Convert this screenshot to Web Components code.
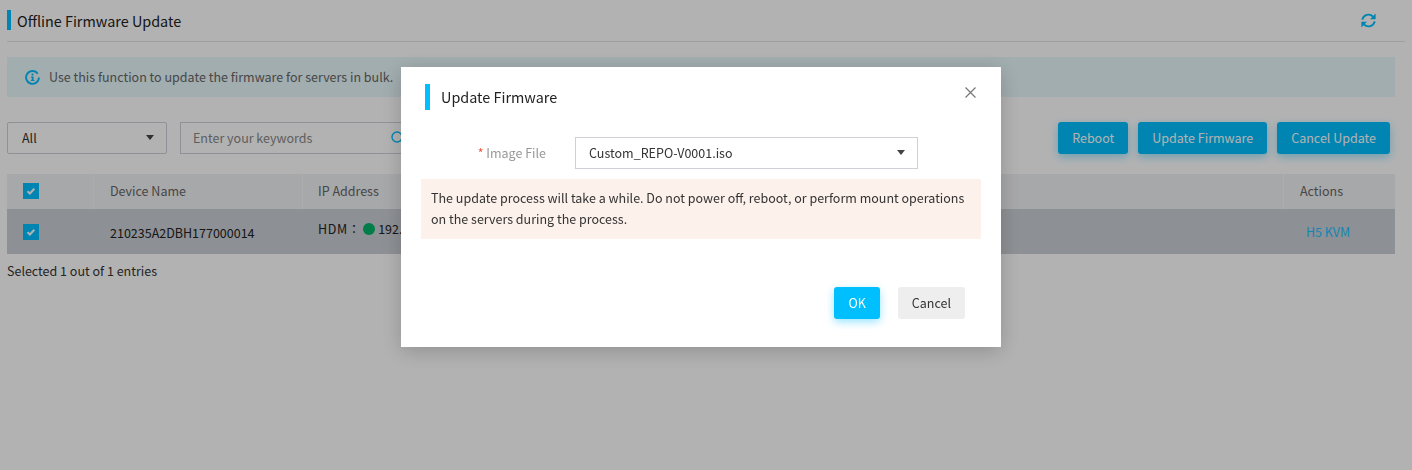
<!DOCTYPE html>
<html>
<head>
<meta charset="utf-8">
<style>
  html, body { margin: 0; height: 100%; background: #fff; overflow: hidden; }
  body { font: 12.5px/20px "Noto Sans CJK SC", "Noto Sans", sans-serif; color: #333; }
</style>
</head>
<body>
<firmware-page>
  <page-title slot="title">Offline Firmware Update</page-title>
  <info-notice slot="notice">Use this function to update the firmware for servers in bulk.</info-notice>
  <pick-box slot="filter" style="width:160px;--tx:14px">All</pick-box>
  <search-box slot="filter"></search-box>
  <act-button slot="actions" kind="primary">Reboot</act-button>
  <act-button slot="actions" kind="primary">Update Firmware</act-button>
  <act-button slot="actions" kind="primary">Cancel Update</act-button>
  <device-table slot="table"></device-table>
  <span slot="footer">Selected 1 out of 1 entries</span>
</firmware-page>
<modal-layer>
  <update-dialog></update-dialog>
</modal-layer>

<script>
(function() {

function define(name, css, html) {
  customElements.define(name, class extends HTMLElement {
    constructor() {
      super();
      this.attachShadow({mode: 'open'}).innerHTML = '<style>' + css + '</style>' + html;
    }
  });
}

const caret = '<svg width="8" height="5" viewBox="0 0 8 5"><path d="M0 0h8L4 5z" fill="#444"/></svg>';
const refreshHalf = '<path d="M1.300 6.600A6.300 6.300 0 0 1 12 3.600" fill="none" stroke="#00bfff" stroke-width="1.900"/><path d="M14.600 .6v5.600H9z" fill="#00bfff"/>';

define('firmware-page', `
  :host { display: block; }
  .content { padding: 0 17px 0 7px; }
  .notice { margin-top: 15px; }
  .tools { display: flex; justify-content: space-between; margin-top: 25px; }
  .group { display: flex; gap: 13px; }
  .group.right { gap: 10px; margin-right: 5px; }
  .table { margin-top: 20px; }
  .footer { margin-top: 7px; color: #333; }
`, `
  <slot name="title"></slot>
  <div class="content">
    <div class="notice"><slot name="notice"></slot></div>
    <div class="tools">
      <div class="group"><slot name="filter"></slot></div>
      <div class="group right"><slot name="actions"></slot></div>
    </div>
    <div class="table"><slot name="table"></slot></div>
    <div class="footer"><slot name="footer"></slot></div>
  </div>
`);

define('page-title', `
  :host { display: block; margin: 0 7px; height: 41px; border-bottom: 1px solid #e3e4ea; box-sizing: content-box; }
  .row { display: flex; align-items: center; height: 41px; }
  .bar { width: 4px; height: 20px; background: #00bfff; margin: -1px 6px 0 0; }
  .text { font-size: 14.4px; color: #222; flex: 1; }
  svg { margin-right: 29px; display: block; }
`, `
  <div class="row">
    <div class="bar"></div>
    <div class="text"><slot></slot></div>
    <svg width="15" height="15" viewBox="0 0 15 15">${refreshHalf}<g transform="rotate(180 7.500 7.500)">${refreshHalf}</g></svg>
  </div>
`);

define('info-notice', `
  :host { display: flex; align-items: center; height: 40px; padding-left: 18px; background: #e8f8fb; color: #666; }
  svg { margin-right: 9px; display: block; }
`, `
  <svg width="15" height="15" viewBox="0 0 15 15">
    <path d="M12.700 3.700A6.400 6.400 0 1 0 13.900 7.500" fill="none" stroke="#00bfff" stroke-width="1.900"/>
    <circle cx="7.500" cy="4.600" r="1.100" fill="#00bfff"/>
    <path d="M5.900 6.400h2.700v3.500h.9v1.100H5.800V9.900h.9V7.500h-.8z" fill="#00bfff"/>
  </svg>
  <slot></slot>
`);

define('pick-box', `
  :host { display: flex; align-items: center; justify-content: space-between; box-sizing: border-box; height: 32px; padding: 0 12px 0 var(--tx, 13px); border: 1px solid #cfd0d8; border-radius: var(--rad, 2px); color: #333; background: #fff; }
  svg { margin-top: -1px; }
`, `<span><slot></slot></span>` + caret);

define('search-box', `
  :host { display: flex; align-items: center; justify-content: space-between; box-sizing: border-box; width: 240px; height: 32px; padding: 0 14px 0 12px; border: 1px solid #cfd0d8; color: #888; background: #fff; }
  svg { display: block; }
`, `
  <span>Enter your keywords</span>
  <svg width="14" height="14" viewBox="0 0 14 14"><circle cx="6" cy="6" r="5" fill="none" stroke="#00bfff" stroke-width="1.400"/><path d="M9.600 9.600L13 13" stroke="#00bfff" stroke-width="1.400"/></svg>
`);

define('act-button', `
  :host { display: block; }
  button { display: block; font: inherit; height: 32px; padding: 0 14px; border: 0; border-radius: 3px; cursor: pointer; }
  :host([kind=primary]) button { background: #00bfff; color: #fff; box-shadow: 0 3px 8px rgba(0,191,255,.4); }
  :host([kind=plain]) button { background: #eee; color: #333; }
`, `<button><slot></slot></button>`);

define('check-mark', `
  :host { display: block; width: 16px; height: 16px; background: #00bfff; }
  svg { display: block; }
`, `<svg width="16" height="16" viewBox="0 0 16 16"><path d="M4.500 8.300l2.400 2.200 4.400-4.700" fill="none" stroke="#fff" stroke-width="2"/></svg>`);

define('device-table', `
  :host { display: block; }
  .grid { display: grid; grid-template-columns: 87px 209px 1fr 111px; }
  .head { box-sizing: border-box; height: 35px; padding-bottom: 2px; background: #f0f1f4; color: #666; display: flex; align-items: center; box-shadow: inset -1px 0 #f8f8fa; }
  .head:nth-child(4) { box-shadow: none; }
  .cell { box-sizing: border-box; height: 45px; background: #cbcfd5; display: flex; align-items: center; color: #222; }
  .chk { padding-left: 16px; }
  .txt { padding-left: 16px; }
  .name { padding-top: 2px; }
  .ip { padding: 0 0 5px 15px; }
  .head.ip { padding: 0 0 2px 15px; color: #666; }
  .hdm { letter-spacing: .6px; }
  .colon { font-family: "Noto Sans CJK TC", sans-serif; }
  .dot { width: 12px; height: 12px; border-radius: 50%; background: #00b368; margin: 0 3px 0 3px; }
  a { color: #1ac0ff; margin-left: 6px; }
`, `
  <div class="grid">
    <div class="head chk"><check-mark></check-mark></div>
    <div class="head txt">Device Name</div>
    <div class="head ip">IP Address</div>
    <div class="head txt">Actions</div>
    <div class="cell chk"><check-mark></check-mark></div>
    <div class="cell txt name">210235A2DBH177000014</div>
    <div class="cell ip"><span class="hdm">HDM</span><span class="colon">：</span><span class="dot"></span>192.</div>
    <div class="cell txt"><a>H5 KVM</a></div>
  </div>
`);

define('modal-layer', `
  :host { display: block; position: fixed; left: 0; top: 0; right: 0; bottom: 0; background: rgba(0,0,0,.3); }
`, `<slot></slot>`);

define('update-dialog', `
  :host { display: block; position: absolute; left: 401px; top: 67px; width: 600px; height: 280px; box-sizing: border-box; padding: 17px 20px 0; background: #fff; box-shadow: 0 4px 20px rgba(0,0,0,.2); color: #333; }
  .title { display: flex; align-items: center; height: 26px; padding-left: 4px; font-size: 14.4px; color: #222; }
  .title i { width: 5px; height: 26px; background: #00bfff; margin-right: 11px; }
  .title span { flex: 1; }
  .title svg { display: block; margin: -9px 4px 0 0; }
  .form { display: flex; align-items: center; margin-top: 27px; }
  label { width: 125px; text-align: right; color: #999; margin-right: 29px; }
  label b { font-weight: normal; color: #f5563c; }
  pick-box { width: 343px; }
  .warn { margin-top: 10px; padding: 9px 10px 0; height: 60px; box-sizing: border-box; background: #fdf1eb; line-height: 20.5px; }
  .btns { display: flex; justify-content: flex-end; gap: 18px; margin: 48px 16px 0 0; }
`, `
  <div class="title"><i></i><span>Update Firmware</span>
    <svg width="13" height="13" viewBox="0 0 13 13"><path d="M1.500 1.500l10 10M11.500 1.500l-10 10" stroke="#777" stroke-width="1.200"/></svg>
  </div>
  <div class="form">
    <label><b>*</b> Image File</label>
    <pick-box style="--tx:13px;--rad:0">Custom_REPO-V0001.iso</pick-box>
  </div>
  <div class="warn">The update process will take a while. Do not power off, reboot, or perform mount operations on the servers during the process.</div>
  <div class="btns">
    <act-button kind="primary">OK</act-button>
    <act-button kind="plain">Cancel</act-button>
  </div>
`);

})();
</script>
</body>
</html>
